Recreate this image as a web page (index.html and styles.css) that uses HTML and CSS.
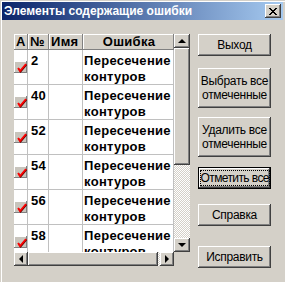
FILE: index.html
```html
<!doctype html>
<html lang="ru">
  <head>
    <meta charset="utf-8">
    <link rel="stylesheet" href="styles.css">
  </head>
  <body>
    <svg width="0" height="0" class="defs">
      <symbol id="chk" viewBox="0 0 13 12">
        <rect x="0" y="0" width="13" height="12" fill="#808080"/>
        <rect x="0" y="0" width="12" height="11" fill="#fff"/>
        <rect x="1" y="1" width="11" height="10" fill="#c8c4bc"/>
        <path d="M4 7 L6 10 L12 3" stroke="#600" stroke-width="1.6" fill="none" transform="translate(0.6 0.6)"/>
        <path d="M4 7 L6 10 L12 3" stroke="#f00" stroke-width="1.8" fill="none"/>
      </symbol>
    </svg>

    <div class="window">
      <div class="titlebar">
        <span class="title">Элементы содержащие ошибки</span>
        <div class="close-btn">
          <svg width="8" height="7" viewBox="0 0 8 7"><path d="M0 0 L7 7 M1 0 L8 7 M7 0 L0 7 M8 0 L1 7" stroke="#000" stroke-width="1" shape-rendering="crispEdges"/></svg>
        </div>
      </div>

      <div class="content">
        <div class="grid-box">
          <div class="table">
            <div class="row head">
              <div class="cell">А</div>
              <div class="cell">№</div>
              <div class="cell">Имя</div>
              <div class="cell center">Ошибка</div>
            </div>
            <div class="row">
              <div class="cell icon"><svg width="13" height="12"><use href="#chk"/></svg></div>
              <div class="cell">2</div>
              <div class="cell"></div>
              <div class="cell">Пересечение контуров</div>
            </div>
            <div class="row">
              <div class="cell icon"><svg width="13" height="12"><use href="#chk"/></svg></div>
              <div class="cell">40</div>
              <div class="cell"></div>
              <div class="cell">Пересечение контуров</div>
            </div>
            <div class="row">
              <div class="cell icon"><svg width="13" height="12"><use href="#chk"/></svg></div>
              <div class="cell">52</div>
              <div class="cell"></div>
              <div class="cell">Пересечение контуров</div>
            </div>
            <div class="row">
              <div class="cell icon"><svg width="13" height="12"><use href="#chk"/></svg></div>
              <div class="cell">54</div>
              <div class="cell"></div>
              <div class="cell">Пересечение контуров</div>
            </div>
            <div class="row">
              <div class="cell icon"><svg width="13" height="12"><use href="#chk"/></svg></div>
              <div class="cell">56</div>
              <div class="cell"></div>
              <div class="cell">Пересечение контуров</div>
            </div>
            <div class="row">
              <div class="cell icon"><svg width="13" height="12"><use href="#chk"/></svg></div>
              <div class="cell">58</div>
              <div class="cell"></div>
              <div class="cell">Пересечение контуров</div>
            </div>
          </div>

          <div class="vscroll">
            <div class="sbtn"><span class="arr up"></span></div>
            <div class="thumb vthumb"></div>
            <div class="track"></div>
            <div class="sbtn"><span class="arr down"></span></div>
          </div>

          <div class="hscroll">
            <div class="sbtn hbtn"><span class="arr left"></span></div>
            <div class="thumb hthumb"></div>
            <div class="track"></div>
            <div class="sbtn hbtn"><span class="arr right"></span></div>
          </div>
          <div class="corner"></div>
        </div>

        <div class="buttons">
          <button class="btn">Выход</button>
          <button class="btn tall">Выбрать все<br>отмеченные</button>
          <button class="btn tall">Удалить все<br>отмеченные</button>
          <button class="btn focused"><span class="focus-ring">Отметить все</span></button>
          <button class="btn">Справка</button>
          <button class="btn">Исправить</button>
        </div>
      </div>
    </div>
  </body>
</html>
```

FILE: styles.css
```css
body {
  margin: 0;
  background-color: #d4d0c8;
  font-family: "Liberation Sans", Arial, sans-serif;
}
.defs {
  position: absolute;
}

.window {
  width: 285px;
  height: 282px;
  box-sizing: border-box;
  padding-top: 2px;
  box-shadow: inset 1px 1px #d4d0c8, inset 2px 2px #fff;
  overflow: hidden;
}

.titlebar {
  height: 18px;
  margin: 0 2px 0 2px;
  display: flex;
  align-items: center;
  justify-content: space-between;
  background: linear-gradient(to right, #0a246a, #a6caf0);
}
.title {
  color: #fff;
  font-weight: bold;
  font-size: 12px;
  letter-spacing: 0;
  padding-left: 2px;
}
.close-btn {
  width: 16px;
  height: 14px;
  margin-right: 2px;
  box-sizing: border-box;
  background-color: #d4d0c8;
  box-shadow: inset -1px -1px #404040, inset 1px 1px #fff, inset -2px -2px #808080;
  display: flex;
  align-items: center;
  justify-content: center;
}

.content {
  display: flex;
  gap: 8px;
  padding: 14px 0 0 14px;
}

/* list with scrollbars */
.grid-box {
  display: grid;
  grid-template-columns: 160px 16px;
  grid-template-rows: 218px 14px;
}
.table {
  overflow: hidden;
  background-color: #fff;
}
.row {
  display: grid;
  grid-template-columns: 14px 21px 34px 91px;
  height: 35px;
}
.cell {
  box-sizing: border-box;
  border-right: 1px solid #c0c0c0;
  border-bottom: 1px solid #c0c0c0;
  padding: 3px 0 0 3px;
  font-size: 13px;
  font-weight: bold;
  line-height: 16px;
  letter-spacing: 0.3px;
  overflow: hidden;
}
.row .cell:last-child {
  padding-left: 1px;
}
.cell.icon {
  padding: 0;
  display: flex;
  align-items: center;
}
.row.head {
  height: 16px;
}
.head .cell {
  background-color: #d4d0c8;
  border: none;
  box-shadow: inset -1px -1px #808080, inset 1px 1px #fff;
  padding: 1px 0 0 2px;
  line-height: 14px;
}
.head .cell.center {
  text-align: center;
}

.vscroll {
  display: flex;
  flex-direction: column;
}
.hscroll {
  display: flex;
}
.sbtn, .thumb {
  background-color: #d4d0c8;
  box-shadow: inset -1px -1px #404040, inset 1px 1px #fff, inset -2px -2px #808080;
  display: flex;
  align-items: center;
  justify-content: center;
}
.sbtn {
  height: 14px;
}
.hbtn {
  width: 14px;
}
.vthumb {
  height: 117px;
}
.hthumb {
  width: 130px;
}
.track {
  flex: 1;
  background: repeating-conic-gradient(#fff 0 25%, #d4d0c8 0 50%) 0 0 / 2px 2px;
}
.corner {
  background-color: #d4d0c8;
}
.arr {
  width: 0;
  height: 0;
  border: 4px solid transparent;
}
.arr.up {
  border-top: 0;
  border-bottom-color: #000;
}
.arr.down {
  border-bottom: 0;
  border-top-color: #000;
}
.arr.left {
  border-left: 0;
  border-right-color: #000;
}
.arr.right {
  border-right: 0;
  border-left-color: #000;
}

/* right column */
.buttons {
  display: flex;
  flex-direction: column;
  width: 73px;
}
.btn {
  height: 22px;
  padding: 0;
  border: none;
  background-color: #d4d0c8;
  box-shadow: inset -1px -1px #404040, inset 1px 1px #fff, inset -2px -2px #808080;
  font-family: "Liberation Sans", Arial, sans-serif;
  font-size: 12px;
  letter-spacing: -0.3px;
  line-height: 14px;
  color: #000;
  white-space: nowrap;
  overflow: hidden;
}
.btn.tall {
  height: 40px;
}
.btn:nth-child(2) { margin-top: 12px; }
.btn:nth-child(3) { margin-top: 9px; }
.btn:nth-child(4) { margin-top: 10px; }
.btn:nth-child(5) { margin-top: 15px; }
.btn:nth-child(6) { margin-top: 20px; }

.btn.focused {
  border: 1px solid #000;
  box-shadow: inset -1px -1px #404040, inset 1px 1px #fff, inset -2px -2px #808080;
  display: flex;
  align-items: center;
  justify-content: center;
}
.focus-ring {
  display: block;
  outline: 1px dotted #000;
  outline-offset: 0;
  padding: 0;
  letter-spacing: -0.6px;
  line-height: 14px;
  width: 68px;
  overflow: hidden;
}
```
